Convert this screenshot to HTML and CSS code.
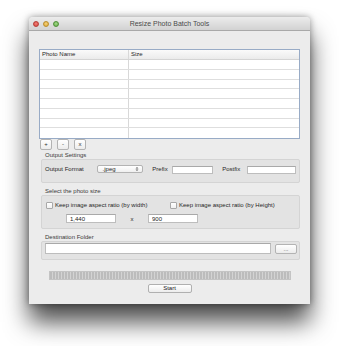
FILE: index.html
```html
<!DOCTYPE html>
<html lang="en">
  <head>
    <meta charset="UTF-8" />
    <meta name="viewport" content="width=device-width, initial-scale=1.0" />
    <title>Resize Photo Batch Tools</title>
    <link rel="stylesheet" href="styles.css">
  </head>
  <body>
    <div class="window">
      <!-- Title bar -->
      <div class="titlebar">
        <div class="lights">
          <span class="light red"></span>
          <span class="light yellow"></span>
          <span class="light green"></span>
        </div>
        <div class="title">Resize Photo Batch Tools</div>
      </div>

      <div class="content">
        <!-- Photo list -->
        <div class="table">
          <div class="row head">
            <div class="cell name">Photo Name</div>
            <div class="cell">Size</div>
          </div>
          <div class="row"><div class="cell name"></div><div class="cell"></div></div>
          <div class="row"><div class="cell name"></div><div class="cell"></div></div>
          <div class="row"><div class="cell name"></div><div class="cell"></div></div>
          <div class="row"><div class="cell name"></div><div class="cell"></div></div>
          <div class="row"><div class="cell name"></div><div class="cell"></div></div>
          <div class="row"><div class="cell name"></div><div class="cell"></div></div>
          <div class="row"><div class="cell name"></div><div class="cell"></div></div>
          <div class="row last"><div class="cell name"></div><div class="cell"></div></div>
        </div>

        <div class="list-buttons">
          <button class="small-btn">+</button>
          <button class="small-btn">-</button>
          <button class="small-btn">x</button>
        </div>

        <!-- Output settings -->
        <div class="group-label first">Output Settings</div>
        <div class="group output">
          <span class="format-label">Output Format</span>
          <div class="select">
            <span>.jpeg</span>
            <svg width="4" height="6" viewBox="0 0 4 6">
              <path d="M0.5 2.5 L2 1 L3.5 2.5 Z M0.5 3.5 L2 5 L3.5 3.5 Z" fill="#666" />
            </svg>
          </div>
          <span class="prefix-label">Prefix</span>
          <input class="field prefix" type="text" />
          <span class="postfix-label">Postfix</span>
          <input class="field postfix" type="text" />
        </div>

        <!-- Photo size -->
        <div class="group-label">Select the photo size</div>
        <div class="group size">
          <div class="checks">
            <label class="check"><span class="box"></span>Keep image aspect ratio (by width)</label>
            <label class="check"><span class="box"></span>Keep image aspect ratio (by Height)</label>
          </div>
          <div class="dims">
            <input class="field dim" type="text" value="1,440" />
            <span class="times">x</span>
            <input class="field dim" type="text" value="900" />
          </div>
        </div>

        <!-- Destination -->
        <div class="group-label">Destination Folder</div>
        <div class="group dest">
          <input class="field folder" type="text" />
          <button class="small-btn browse">...</button>
        </div>

        <div class="progress"></div>

        <div class="actions">
          <button class="start-btn">Start</button>
        </div>
      </div>
    </div>
  </body>
</html>
```

FILE: styles.css
```css
html {
  background: #fff;
}
body {
  margin: 0;
  min-height: 346px;
  box-sizing: border-box;
  padding: 17px 0 0 29px;
  font-family: "Liberation Sans", Arial, sans-serif;
  font-size: 6px;
  color: #262626;
}
.window {
  width: 281px;
  height: 287px;
  background: #ececec;
  border-radius: 4px 4px 0 0;
  box-shadow: 0 18px 24px rgba(0, 0, 0, 0.7), 0 0 7px rgba(0, 0, 0, 0.4);
  overflow: hidden;
}
.titlebar {
  position: relative;
  height: 13px;
  background: linear-gradient(#ececec, #d2d2d2);
  border-bottom: 1px solid #a9a9a9;
  display: flex;
  align-items: center;
  justify-content: center;
}
.lights {
  position: absolute;
  left: 4px;
  top: 4px;
  display: flex;
  gap: 4px;
}
.light {
  width: 6px;
  height: 6px;
  border-radius: 50%;
  box-sizing: border-box;
}
.red {
  background: radial-gradient(circle at 50% 40%, #f2807a, #d4433c);
  border: 1px solid #b53c36;
}
.yellow {
  background: radial-gradient(circle at 50% 40%, #f5d27a, #dba634);
  border: 1px solid #b98d2d;
}
.green {
  background: radial-gradient(circle at 50% 40%, #a3d98a, #62ad45);
  border: 1px solid #4f8f39;
}
.title {
  font-size: 7px;
  color: #4a4a4a;
}
.content {
  padding: 18px 10px 0;
}
.table {
  height: 90px;
  box-sizing: border-box;
  border: 1px solid #98abc6;
  background: #fff;
}
.row {
  display: flex;
  height: 9.75px;
  box-sizing: border-box;
  border-bottom: 1px solid #dedede;
}
.row.head {
  height: 10px;
  background: linear-gradient(#fafafa, #ebebeb);
  border-bottom: 1px solid #d4d4d4;
}
.row.last {
  border-bottom: none;
}
.cell {
  flex: 1;
  padding-left: 2px;
  line-height: 9px;
}
.cell.name {
  flex: 0 0 86px;
  border-right: 1px solid #d8d8d8;
}
.list-buttons {
  display: flex;
  gap: 5px;
  padding-left: 1px;
}
.small-btn {
  width: 12px;
  height: 11px;
  padding: 0;
  font-family: inherit;
  font-size: 6px;
  line-height: 9px;
  color: #333;
  background: linear-gradient(#ffffff, #ececec);
  border: 1px solid #b3b3b3;
  border-radius: 2px;
}
.group-label {
  margin: 5px 0 1px 6px;
  line-height: 6px;
  color: #3a3a3a;
}
.group-label.first {
  margin-top: 2px;
}
.group {
  margin-left: 2px;
  background: #e3e3e3;
  border: 1px solid #d4d4d4;
  border-radius: 2px;
}
.field {
  box-sizing: border-box;
  margin: 0;
  padding: 0 3px;
  background: #fff;
  border: 1px solid #bdbdbd;
  border-top-color: #a9a9a9;
  font-family: inherit;
  font-size: 6px;
  color: #222;
  outline: none;
}
.output {
  height: 24px;
  box-sizing: border-box;
  display: flex;
  align-items: flex-start;
  padding: 5px 3px 0;
}
.format-label {
  width: 52px;
  line-height: 8px;
}
.select {
  width: 47px;
  height: 8px;
  box-sizing: border-box;
  display: flex;
  align-items: center;
  justify-content: space-between;
  padding: 0 3px 0 5px;
  background: linear-gradient(#ffffff, #efefef);
  border: 1px solid #b3b3b3;
  border-radius: 2px;
}
.prefix-label {
  width: 20px;
  margin-left: 9px;
  line-height: 9px;
}
.postfix-label {
  width: 25px;
  margin-left: 9px;
  line-height: 9px;
}
.prefix {
  width: 41px;
  height: 8px;
  margin-top: 1px;
}
.postfix {
  width: 49px;
  height: 8px;
  margin-top: 1px;
}
.size {
  height: 34px;
  box-sizing: border-box;
  padding: 5px 4px 0;
}
.checks {
  display: grid;
  grid-template-columns: 124px 1fr;
  height: 8px;
  align-items: center;
}
.check {
  display: flex;
  align-items: center;
  gap: 2px;
}
.box {
  width: 5px;
  height: 5px;
  background: linear-gradient(#ffffff, #f0f0f0);
  border: 1px solid #a8a8a8;
  border-radius: 1px;
}
.dims {
  display: flex;
  align-items: center;
  margin: 5px 0 0 20px;
}
.dim {
  width: 50px;
  height: 9px;
}
.times {
  width: 32px;
  text-align: center;
}
.dest {
  height: 19px;
  box-sizing: border-box;
  display: flex;
  align-items: flex-start;
  gap: 4px;
  padding: 1px 2px 0 3px;
  margin-top: 1px;
}
.folder {
  width: 227px;
  height: 11px;
}
.browse {
  width: 22px;
  height: 10px;
  margin-top: 1px;
  line-height: 6px;
  color: #555;
}
.progress {
  width: 242px;
  height: 9px;
  margin: 11px auto 0;
  box-sizing: border-box;
  border: 1px solid #c4c4c4;
  background: repeating-linear-gradient(90deg, #bcbcbc 0 2px, #d3d3d3 2px 3px);
}
.actions {
  display: flex;
  justify-content: center;
  margin-top: 4px;
}
.start-btn {
  width: 44px;
  height: 9px;
  padding: 0;
  font-family: inherit;
  font-size: 6px;
  line-height: 7px;
  color: #222;
  background: linear-gradient(#ffffff, #ededed);
  border: 1px solid #b0b0b0;
  border-radius: 2px;
}
```
